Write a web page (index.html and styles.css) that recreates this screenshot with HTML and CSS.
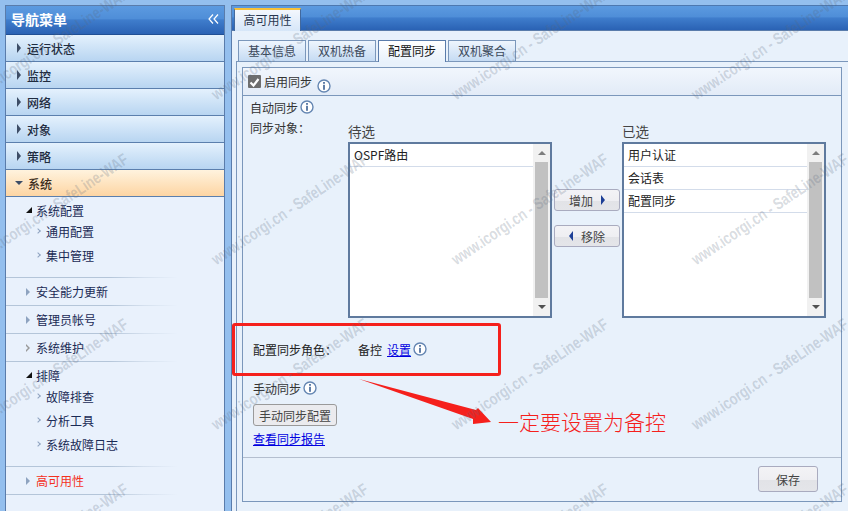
FILE: index.html
```html
<!DOCTYPE html>
<html lang="zh-CN">
<head>
    <meta charset="UTF-8">
    <title>高可用性</title>
    <link rel="stylesheet" href="styles.css">
</head>
<body>
    <aside class="sidebar">
        <div class="sidebar-title">
            <span>导航菜单</span>
            <svg class="collapse-icon" width="11" height="10" viewBox="0 0 11 10"><path d="M5 0.5 L1 5 L5 9.5 M10 0.5 L6 5 L10 9.5" fill="none" stroke="#fff" stroke-width="1.2"/></svg>
        </div>
        <div class="menu-row"><i class="arrow-right"></i>运行状态</div>
        <div class="menu-row"><i class="arrow-right"></i>监控</div>
        <div class="menu-row"><i class="arrow-right"></i>网络</div>
        <div class="menu-row"><i class="arrow-right"></i>对象</div>
        <div class="menu-row"><i class="arrow-right"></i>策略</div>
        <div class="menu-row menu-row-active"><i class="arrow-down"></i>系统</div>
        <div class="tree">
            <div class="tree-group">
                <div class="tree-head"><i class="corner"></i>系统配置</div>
                <div class="leaf"><i class="chevron"></i>通用配置</div>
                <div class="leaf"><i class="chevron"></i>集中管理</div>
            </div>
            <div class="tree-group tree-closed"><div class="tree-head"><i class="closed"></i>安全能力更新</div></div>
            <div class="tree-group tree-closed"><div class="tree-head"><i class="closed"></i>管理员帐号</div></div>
            <div class="tree-group tree-closed"><div class="tree-head"><i class="closed closed-hollow"></i>系统维护</div></div>
            <div class="tree-group">
                <div class="tree-head"><i class="corner"></i>排障</div>
                <div class="leaf"><i class="chevron"></i>故障排查</div>
                <div class="leaf"><i class="chevron"></i>分析工具</div>
                <div class="leaf"><i class="chevron"></i>系统故障日志</div>
            </div>
            <div class="tree-group tree-closed"><div class="tree-head tree-current"><i class="closed"></i>高可用性</div></div>
        </div>
    </aside>

    <main class="main">
        <div class="top-strip">
            <div class="top-tab">高可用性</div>
        </div>
        <div class="inner-tabs">
            <div class="inner-tab">基本信息</div>
            <div class="inner-tab">双机热备</div>
            <div class="inner-tab inner-tab-active">配置同步</div>
            <div class="inner-tab">双机聚合</div>
        </div>
        <div class="tab-panel">
            <div class="form-box">
                <div class="form-head">
                    <span class="checkbox"><svg width="13" height="13" viewBox="0 0 13 13"><path d="M2.5 6.5 L5.5 9.5 L10.5 3" fill="none" stroke="#fff" stroke-width="2.2"/></svg></span>
                    <span>启用同步</span>
                    <svg class="info info-head" viewBox="0 0 14 14"><circle cx="7" cy="7" r="6" fill="#fff"/><circle cx="7" cy="7" r="6" fill="none" stroke="#6486b2" stroke-width="1.4"/><rect x="6.1" y="3" width="1.8" height="1.8" fill="#4f719e"/><rect x="6.1" y="5.8" width="1.8" height="5" fill="#4f719e"/></svg>
                </div>
                <div class="auto-row">
                    <span>自动同步</span>
                    <svg class="info" viewBox="0 0 14 14"><circle cx="7" cy="7" r="6" fill="#fff"/><circle cx="7" cy="7" r="6" fill="none" stroke="#6486b2" stroke-width="1.4"/><rect x="6.1" y="3" width="1.8" height="1.8" fill="#4f719e"/><rect x="6.1" y="5.8" width="1.8" height="5" fill="#4f719e"/></svg>
                </div>
                <div class="transfer">
                    <div class="transfer-label">同步对象：</div>
                    <div class="transfer-col">
                        <div class="caption">待选</div>
                        <div class="listbox">
                            <ul class="items"><li>OSPF路由</li></ul>
                            <div class="scroll"><i class="scroll-up"></i><div class="thumb"></div><i class="scroll-down"></i></div>
                        </div>
                    </div>
                    <div class="transfer-btns">
                        <button class="btn move-btn">增加<i class="btn-right"></i></button>
                        <button class="btn move-btn"><i class="btn-left"></i>移除</button>
                    </div>
                    <div class="transfer-col">
                        <div class="caption">已选</div>
                        <div class="listbox">
                            <ul class="items"><li>用户认证</li><li>会话表</li><li>配置同步</li></ul>
                            <div class="scroll"><i class="scroll-up"></i><div class="thumb"></div><i class="scroll-down"></i></div>
                        </div>
                    </div>
                </div>
                <div class="role-row">
                    <span class="role-label">配置同步角色：</span>
                    <span>备控</span>
                    <a class="link role-link" href="#">设置</a>
                    <svg class="info" viewBox="0 0 14 14"><circle cx="7" cy="7" r="6" fill="#fff"/><circle cx="7" cy="7" r="6" fill="none" stroke="#6486b2" stroke-width="1.4"/><rect x="6.1" y="3" width="1.8" height="1.8" fill="#4f719e"/><rect x="6.1" y="5.8" width="1.8" height="5" fill="#4f719e"/></svg>
                </div>
                <div class="manual-row">
                    <span>手动同步</span>
                    <svg class="info" viewBox="0 0 14 14"><circle cx="7" cy="7" r="6" fill="#fff"/><circle cx="7" cy="7" r="6" fill="none" stroke="#6486b2" stroke-width="1.4"/><rect x="6.1" y="3" width="1.8" height="1.8" fill="#4f719e"/><rect x="6.1" y="5.8" width="1.8" height="5" fill="#4f719e"/></svg>
                </div>
                <button class="btn manual-btn">手动同步配置</button>
                <a class="link report-link" href="#">查看同步报告</a>
                <div class="form-foot">
                    <button class="btn save-btn">保存</button>
                </div>
            </div>
        </div>
    </main>

    <!-- red markup drawn on top of the screenshot -->
    <div class="mark-box"></div>
    <svg class="mark-arrow" width="848" height="511" viewBox="0 0 848 511"><polygon points="359,379 476,410 478,408 491,422 473,424 473,419" fill="#f5201c"/></svg>
    <div class="mark-text">一定要设置为备控</div>

    <div class="watermarks">
        <div class="watermark-grid">
            <span>www.icorgi.cn - SafeLine-WAF</span><span>www.icorgi.cn - SafeLine-WAF</span><span>www.icorgi.cn - SafeLine-WAF</span><span>www.icorgi.cn - SafeLine-WAF</span>
            <span>www.icorgi.cn - SafeLine-WAF</span><span>www.icorgi.cn - SafeLine-WAF</span><span>www.icorgi.cn - SafeLine-WAF</span><span>www.icorgi.cn - SafeLine-WAF</span>
            <span>www.icorgi.cn - SafeLine-WAF</span><span>www.icorgi.cn - SafeLine-WAF</span><span>www.icorgi.cn - SafeLine-WAF</span><span>www.icorgi.cn - SafeLine-WAF</span>
            <span>www.icorgi.cn - SafeLine-WAF</span><span>www.icorgi.cn - SafeLine-WAF</span><span>www.icorgi.cn - SafeLine-WAF</span><span>www.icorgi.cn - SafeLine-WAF</span>
        </div>
    </div>
</body>
</html>
```

FILE: styles.css
```css
* {
    margin: 0;
    padding: 0;
    box-sizing: border-box;
}

body {
    position: relative;
    display: flex;
    width: 848px;
    height: 511px;
    overflow: hidden;
    background-color: #94bfee;
    color: #222;
    font-family: "Noto Sans CJK SC", "Liberation Sans", sans-serif;
    font-size: 12px;
}

/* sidebar */
.sidebar {
    width: 220px;
    height: 506px;
    margin: 5px 0 0 5px;
    border: 1px solid #5a7cab;
    border-bottom: none;
    background-color: #e9f1fc;
}

.sidebar-title {
    display: flex;
    align-items: center;
    justify-content: space-between;
    height: 29px;
    padding: 0 5px 2px 5px;
    border-bottom: 1px solid #204f94;
    background: linear-gradient(#5c9ae0 0, #4f8ed8 45%, #3f7dcc 50%, #2a62b4 100%);
    color: #fff;
    font-size: 14px;
    font-weight: 700;
}

.menu-row {
    display: flex;
    align-items: center;
    height: 27px;
    border-bottom: 1px solid #5b7fad;
    background: linear-gradient(#e4f1fd, #b8d5f1);
    color: #1f2c40;
    font-weight: 500;
}

.menu-row-active {
    background: linear-gradient(#fff3de, #fdd5a3);
    color: #3a2c20;
}

.arrow-right {
    width: 0;
    height: 0;
    margin: 0 6px 0 11px;
    border-top: 5px solid transparent;
    border-bottom: 5px solid transparent;
    border-left: 4px solid #3d4d66;
}

.arrow-down {
    width: 0;
    height: 0;
    margin: 0 5px 0 9px;
    border-top: 4px solid #3d4d66;
    border-left: 4px solid transparent;
    border-right: 4px solid transparent;
}

.tree-group {
    padding: 4px 0 9px;
    border-bottom: 1px solid;
    border-image: linear-gradient(90deg, #b4c5d9 60%, #d5e0ee 80%, #e9f1fc) 1;
    width: 171px;
    color: #1a2a55;
}

.tree-closed {
    height: 28px;
    padding: 0;
}

.tree-head {
    display: flex;
    align-items: center;
    height: 18px;
    white-space: nowrap;
}

.tree-closed .tree-head {
    height: 27px;
}

.tree-current {
    color: #f4321e;
}

.leaf {
    display: flex;
    align-items: center;
    height: 24px;
    padding-left: 30px;
    white-space: nowrap;
}

.leaf:last-child {
    margin-bottom: 1px;
}

.corner {
    width: 0;
    height: 0;
    margin: 0 4px 0 20px;
    border-bottom: 6px solid #111;
    border-left: 6px solid transparent;
}

.closed {
    width: 0;
    height: 0;
    margin: 0 6px 0 20px;
    border-top: 4px solid transparent;
    border-bottom: 4px solid transparent;
    border-left: 4px solid #8ea3c0;
}

.closed-hollow {
    position: relative;
    border-left-color: #999;
}

.closed-hollow::after {
    content: "";
    position: absolute;
    left: -4px;
    top: -2px;
    border-top: 2px solid transparent;
    border-bottom: 2px solid transparent;
    border-left: 2px solid #e9f1fc;
}

.chevron {
    width: 4px;
    height: 4px;
    margin-right: 6px;
    border-top: 1px solid #8ea3c0;
    border-right: 1px solid #8ea3c0;
    transform: rotate(45deg);
}

/* main area */
.main {
    width: 617px;
    height: 506px;
    margin: 5px 0 0 6px;
    border-left: 1px solid #5a7cab;
    background-color: #e8f1fb;
    overflow: hidden;
}

.top-strip {
    height: 26px;
    padding: 2px 0 0 2px;
    border-top: 1px solid #4d78b0;
    border-bottom: 1px solid #5a7cab;
    background: linear-gradient(#5c9ae0 0, #4f8ed8 45%, #3f7dcc 50%, #2a62b4 100%);
}

.top-tab {
    width: 67px;
    height: 23px;
    border: 1px solid #42699e;
    border-top: 2px solid #f7c13b;
    border-bottom: none;
    background: linear-gradient(#f3f7fd, #d6e6f8);
    color: #2a3850;
    line-height: 20px;
    text-align: center;
    font-size: 12px;
}

.inner-tabs {
    display: flex;
    gap: 2px;
    height: 30px;
    padding: 9px 0 0 6px;
}

.inner-tab {
    width: 68px;
    height: 21px;
    border: 1px solid #7b97bb;
    border-bottom: none;
    background: linear-gradient(#eef5fd, #c5dbf3);
    color: #3c4a5c;
    line-height: 20px;
    text-align: center;
}

.inner-tab-active {
    height: 22px;
    position: relative;
    border-color: #5a7cab;
    background: linear-gradient(#fff, #e8f1fb);
    color: #111;
}

.tab-panel {
    height: 450px;
    margin-left: 4px;
    padding: 5px;
    border-top: 1px solid #7b97bb;
    border-left: 1px solid #7b97bb;
}

.form-box {
    width: 600px;
    height: 435px;
    border: 1px solid #7b97bb;
}

.form-head {
    display: flex;
    align-items: center;
    height: 28px;
    padding-left: 5px;
    border-bottom: 1px solid #7b97bb;
    background: linear-gradient(#f1f6fd, #e2ebf7);
    color: #333;
}

.checkbox {
    display: block;
    width: 13px;
    height: 13px;
    margin-right: 3px;
    border-radius: 1px;
    background-color: #6e6e6e;
}

.info {
    width: 14px;
    height: 14px;
    margin-left: 2px;
    flex: none;
}

.info-head {
    margin: 8px 0 0 5px;
}

.auto-row {
    display: flex;
    align-items: center;
    height: 22px;
    padding-left: 7px;
    color: #333;
}

.transfer {
    display: flex;
    height: 200px;
}

.transfer-label {
    width: 105px;
    padding: 1px 0 0 7px;
    color: #333;
}

.transfer-col {
    width: 204px;
}

.caption {
    height: 24px;
    padding-top: 3px;
    color: #444;
    font-size: 13.5px;
}

.listbox {
    display: flex;
    height: 176px;
    border: 2px solid #5f7a9e;
    background-color: #fff;
}

.items {
    flex: 1;
    list-style: none;
}

.items li {
    height: 23px;
    padding-left: 4px;
    border-bottom: 1px solid #d3dcea;
    color: #222;
    line-height: 22px;
}

.scroll {
    display: flex;
    flex-direction: column;
    align-items: center;
    justify-content: space-between;
    width: 17px;
    padding: 7px 0;
    background-color: #f1f1f1;
}

.thumb {
    width: 13px;
    height: 136px;
    background-color: #c1c1c1;
}

.scroll-up {
    border-bottom: 4px solid #7d7d7d;
    border-left: 4px solid transparent;
    border-right: 4px solid transparent;
}

.scroll-down {
    border-top: 4px solid #505050;
    border-left: 4px solid transparent;
    border-right: 4px solid transparent;
}

.transfer-btns {
    display: flex;
    flex-direction: column;
    gap: 14px;
    width: 70px;
    padding: 71px 0 0 2px;
}

.btn {
    border: 1px solid #a9abbf;
    border-radius: 3px;
    background: linear-gradient(#f3f3f6 0, #eeeef2 55%, #e2e3e7 56%, #e4e5e9 100%);
    color: #444;
    font-family: inherit;
    font-size: 12px;
}

.move-btn {
    display: flex;
    align-items: center;
    justify-content: center;
    gap: 8px;
    width: 66px;
    height: 22px;
}

.btn-right {
    border-top: 5px solid transparent;
    border-bottom: 5px solid transparent;
    border-left: 4px solid #1d3f96;
}

.btn-left {
    border-top: 5px solid transparent;
    border-bottom: 5px solid transparent;
    border-right: 4px solid #1d3f96;
}

.role-row {
    display: flex;
    align-items: center;
    height: 22px;
    margin-top: 20px;
    padding-left: 10px;
    color: #222;
}

.role-label {
    width: 105px;
}

.link {
    color: #0000e0;
    text-decoration: underline;
}

.role-link {
    margin-left: 5px;
}

.manual-row {
    display: flex;
    align-items: center;
    height: 22px;
    margin-top: 17px;
    padding-left: 10px;
    color: #333;
}

.manual-btn {
    display: block;
    width: 84px;
    height: 22px;
    margin: 5px 0 0 10px;
    border-color: #9a9a9a;
    background: #ebebee;
}

.report-link {
    display: block;
    width: 72px;
    height: 18px;
    margin: 4px 0 0 10px;
    line-height: 18px;
    white-space: nowrap;
}

.form-foot {
    display: flex;
    justify-content: flex-end;
    height: 43px;
    margin-top: 9px;
    padding: 8px 23px 0 0;
    border-top: 1px solid #b4bfcf;
}

.save-btn {
    width: 60px;
    height: 26px;
}

/* annotations over the screenshot */
.mark-box {
    position: absolute;
    left: 232px;
    top: 323px;
    width: 269px;
    height: 53px;
    border: 3px solid #f5201c;
    border-radius: 3px;
}

.mark-arrow {
    position: absolute;
    left: 0;
    top: 0;
}

.mark-text {
    position: absolute;
    left: 498px;
    top: 406px;
    color: #f5201c;
    font-size: 21px;
    font-weight: 300;
    line-height: 30px;
    white-space: nowrap;
}

.watermarks {
    position: absolute;
    left: 0;
    top: 0;
    width: 848px;
    height: 511px;
    overflow: hidden;
    pointer-events: none;
}

.watermark-grid {
    display: grid;
    grid-template-columns: repeat(4, 240px);
    grid-auto-rows: 165px;
    margin: -62px 0 0 -22px;
}

.watermark-grid span {
    align-self: end;
    width: 190px;
    color: rgba(90, 105, 125, 0.24);
    font-family: "Liberation Sans", sans-serif;
    font-size: 16.5px;
    font-weight: 700;
    line-height: 18px;
    white-space: nowrap;
    transform-origin: 0 100%;
    transform: rotate(-34deg) scaleX(0.78);
}
```
